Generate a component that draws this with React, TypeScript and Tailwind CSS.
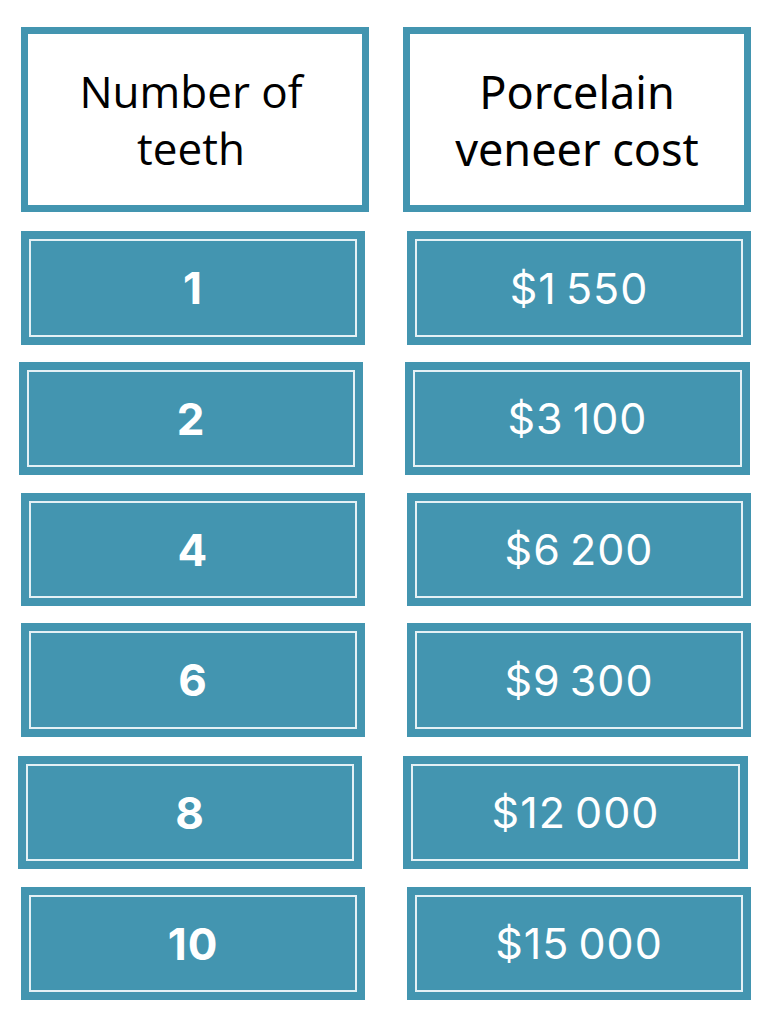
import React from "react";

function ValueBox({ text, bold, className }: { text: string; bold: boolean; className: string }) {
  return (
    <div className={`bg-[#4395b0] p-[8px] ${className}`}>
      <div className="h-full w-full border-2 border-[#e4f1f5] flex items-center justify-center">
        {bold ? (
          <span className="text-white text-[44px] font-bold leading-none tracking-[1px] [font-family:Inter,'Noto_Sans',sans-serif]">
            {text}
          </span>
        ) : (
          <span className="text-white text-[43px] font-normal leading-none tracking-[1px] [word-spacing:-4px] [font-family:Inter,'Noto_Sans',sans-serif]">
            {text}
          </span>
        )}
      </div>
    </div>
  );
}

export default function App() {
  return (
    <div className="w-[768px] h-[1018px] bg-white overflow-hidden [font-family:'Open_Sans',sans-serif]">
      <div className="flex pt-[27px]">
        <div className="ml-[21px] w-[348px] h-[185px] border-[7px] border-[#4395b0] bg-white flex items-center justify-center">
          <div className="text-center text-black text-[44px] leading-[57px] [font-family:'Open_Sans',sans-serif] translate-x-[-4px]">
            Number of
            <br />
            teeth
          </div>
        </div>
        <div className="ml-[34px] w-[348px] h-[185px] border-[7px] border-[#4395b0] bg-white flex items-center justify-center">
          <div className="text-center text-black text-[45px] leading-[57px] [font-family:'Noto_Sans',sans-serif]">
            Porcelain
            <br />
            veneer cost
          </div>
        </div>
      </div>

      <div className="flex mt-[19px]">
        <ValueBox text="1" bold className="ml-[21px] w-[344px] h-[114px]" />
        <ValueBox text="$1 550" bold={false} className="ml-[42px] w-[344px] h-[114px]" />
      </div>
      <div className="flex mt-[17px]">
        <ValueBox text="2" bold className="ml-[19px] w-[344px] h-[113px]" />
        <ValueBox text="$3 100" bold={false} className="ml-[42px] w-[345px] h-[113px]" />
      </div>
      <div className="flex mt-[18px]">
        <ValueBox text="4" bold className="ml-[21px] w-[344px] h-[113px]" />
        <ValueBox text="$6 200" bold={false} className="ml-[42px] w-[344px] h-[113px]" />
      </div>
      <div className="flex mt-[17px]">
        <ValueBox text="6" bold className="ml-[21px] w-[344px] h-[114px]" />
        <ValueBox text="$9 300" bold={false} className="ml-[42px] w-[344px] h-[114px]" />
      </div>
      <div className="flex mt-[19px]">
        <ValueBox text="8" bold className="ml-[18px] w-[344px] h-[113px]" />
        <ValueBox text="$12 000" bold={false} className="ml-[41px] w-[345px] h-[113px]" />
      </div>
      <div className="flex mt-[18px]">
        <ValueBox text="10" bold className="ml-[21px] w-[344px] h-[113px]" />
        <ValueBox text="$15 000" bold={false} className="ml-[42px] w-[344px] h-[113px]" />
      </div>
    </div>
  );
}
